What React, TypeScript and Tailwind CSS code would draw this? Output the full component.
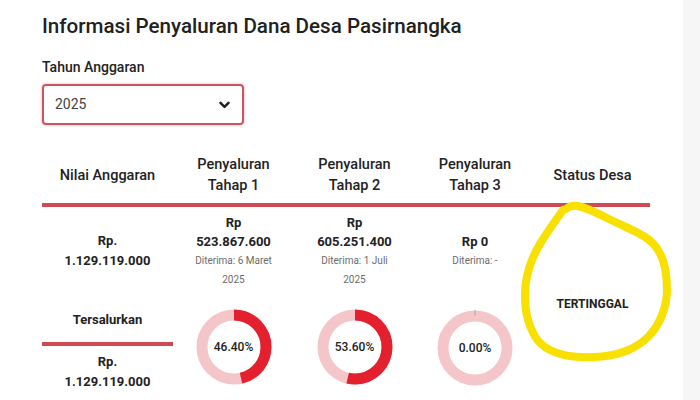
import React from "react";

const red = "#e4202e";
const pink = "#f4c6c9";

const Donut = ({ pct }: { pct: number }) => {
  const r = 32;
  const c = 2 * Math.PI * r;
  return (
    <div className="relative w-[76px] h-[76px]">
      <svg width="76" height="76" viewBox="0 0 76 76" className="-rotate-90">
        <circle cx="38" cy="38" r={r} fill="none" stroke={pink} strokeWidth="11" />
        {pct > 0 && (
          <circle
            cx="38"
            cy="38"
            r={r}
            fill="none"
            stroke={red}
            strokeWidth="11"
            strokeDasharray={`${(c * pct) / 100} ${c}`}
          />
        )}
        {pct === 0 && <line x1="70.5" y1="38" x2="81" y2="38" stroke="#b99295" strokeWidth="0.8" />}
      </svg>
      <div className="absolute inset-0 flex items-center justify-center text-[12px] font-medium text-[#222]">
        {pct.toFixed(2)}%
      </div>
    </div>
  );
};

// hand drawn yellow loop round the status cell
const loop = [
  [563, 210], [550, 228], [533, 255], [525, 282], [525, 308], [530, 328], [540, 345],
  [560, 355], [587, 358], [617, 355], [640, 345], [657, 328], [667, 302], [667, 278],
  [663, 258], [653, 242], [637, 232], [617, 223], [597, 213], [583, 207], [572, 205], [566, 209],
];

const loopPath = () => {
  let d = `M ${loop[0][0]} ${loop[0][1]}`;
  for (let i = 1; i < loop.length - 1; i++) {
    const [x, y] = loop[i];
    const [nx, ny] = loop[i + 1];
    d += ` Q ${x} ${y} ${(x + nx) / 2} ${(y + ny) / 2}`;
  }
  const last = loop[loop.length - 1];
  d += ` L ${last[0]} ${last[1]}`;
  return d;
};

const HeadCell = ({ children }: { children: React.ReactNode }) => (
  <div className="h-[54px] pb-[6px] border-b-4 border-[#cf4a53] flex items-center justify-center text-center text-[14.5px] leading-[21px] font-medium text-[#222]">
    {children}
  </div>
);

const Amount = ({ children }: { children: React.ReactNode }) => (
  <div className="text-[13px] leading-[19px] font-bold text-[#222]">{children}</div>
);

const Small = ({ children }: { children: React.ReactNode }) => (
  <div className="text-[10px] leading-[19px] text-[#6b6b6b]">{children}</div>
);

export default function App() {
  return (
    <div className="relative w-[700px] h-[400px] overflow-hidden flex bg-[#f6f6f6] font-['Roboto',sans-serif]">
      <div className="w-[683px] h-full bg-white px-[42px] pt-[12px]">
        <h1 className="text-[20.6px] leading-[28px] font-medium text-[#212121]">
          Informasi Penyaluran Dana Desa Pasirnangka
        </h1>
        <div className="mt-[17px] text-[14px] leading-[20px] font-medium text-[#222]">Tahun Anggaran</div>
        <div className="mt-[7px] w-[202px] h-[41px] border-2 border-[#cc5562] rounded-[4px] shadow-[0_0_3px_rgba(200,60,80,0.45)] flex items-center justify-between pl-[11px] pr-[12px]">
          <span className="text-[14px] text-[#444]">2025</span>
          <svg width="11" height="8" viewBox="0 0 11 8">
            <polyline points="1.5,1.8 5.5,5.8 9.5,1.8" fill="none" stroke="#222" strokeWidth="2.5" strokeLinecap="round" strokeLinejoin="round" />
          </svg>
        </div>

        <div className="mt-[28px] w-[608px] grid grid-cols-[131px_121px_121px_120px_115px]">
          <HeadCell>Nilai Anggaran</HeadCell>
          <HeadCell>
            Penyaluran
            <br />
            Tahap 1
          </HeadCell>
          <HeadCell>
            Penyaluran
            <br />
            Tahap 2
          </HeadCell>
          <HeadCell>
            Penyaluran
            <br />
            Tahap 3
          </HeadCell>
          <HeadCell>Status Desa</HeadCell>

          <div className="h-[88px] flex flex-col items-center justify-center text-center">
            <div className="text-[13px] leading-[20px] font-bold text-[#222]">Rp.</div>
            <div className="text-[13px] leading-[20px] font-bold text-[#222]">1.129.119.000</div>
          </div>
          <div className="h-[88px] flex flex-col items-center justify-center text-center">
            <Amount>Rp</Amount>
            <Amount>523.867.600</Amount>
            <Small>Diterima: 6 Maret</Small>
            <Small>2025</Small>
          </div>
          <div className="h-[88px] flex flex-col items-center justify-center text-center">
            <Amount>Rp</Amount>
            <Amount>605.251.400</Amount>
            <Small>Diterima: 1 Juli</Small>
            <Small>2025</Small>
          </div>
          <div className="h-[88px] flex flex-col items-center justify-center text-center">
            <Amount>Rp 0</Amount>
            <Small>Diterima: -</Small>
          </div>
          <div className="row-span-2 flex items-center justify-center text-[12px] font-bold text-[#222]">
            TERTINGGAL
          </div>

          <div className="h-[105px] pt-[15px] flex flex-col items-center text-center">
            <div className="text-[13px] leading-[20px] font-bold text-[#222]">Tersalurkan</div>
            <div className="mt-[12px] w-full h-[4px] bg-[#cf4a53]" />
            <div className="mt-[6px] text-[13px] leading-[20px] font-bold text-[#222]">Rp.</div>
            <div className="text-[13px] leading-[20px] font-bold text-[#222]">1.129.119.000</div>
          </div>
          <div className="h-[105px] pb-[2px] flex items-center justify-center">
            <Donut pct={46.4} />
          </div>
          <div className="h-[105px] pb-[2px] flex items-center justify-center">
            <Donut pct={53.6} />
          </div>
          <div className="h-[105px] flex items-center justify-center">
            <Donut pct={0} />
          </div>
        </div>
      </div>

      <svg className="absolute inset-0 pointer-events-none" width="700" height="400" viewBox="0 0 700 400">
        <path d={loopPath()} fill="none" stroke="#f8e000" strokeWidth="8" strokeLinecap="round" strokeLinejoin="round" />
      </svg>
    </div>
  );
}
